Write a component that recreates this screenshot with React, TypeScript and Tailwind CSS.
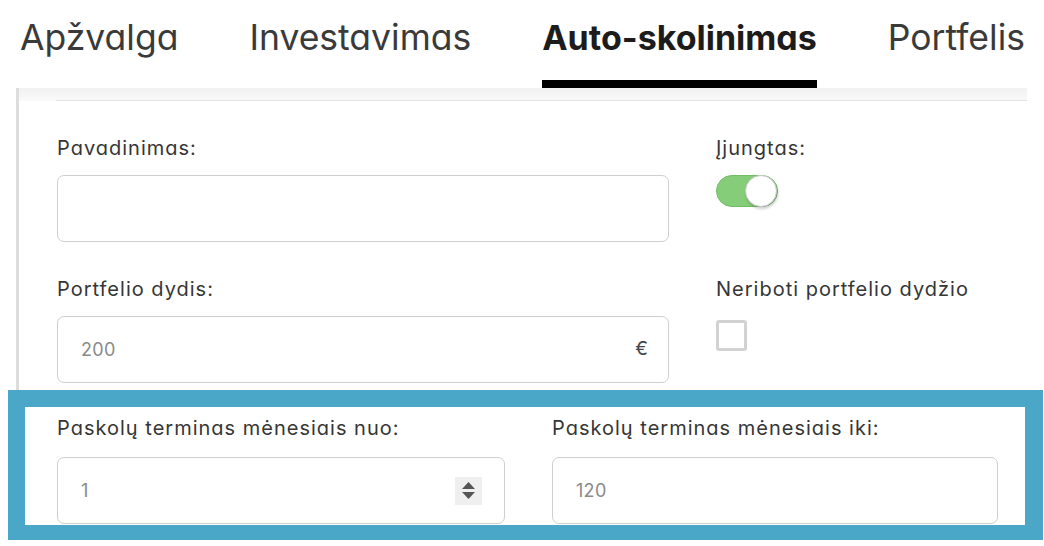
import React from "react";

const font = "[font-family:Inter,'Noto_Sans',sans-serif] [font-feature-settings:'cv11']";

function Label({ children }: { children: React.ReactNode }) {
  return (
    <div className="h-[24px] text-[20px] leading-[24px] tracking-[1px] text-[#363636] whitespace-nowrap">
      {children}
    </div>
  );
}

function Input({ value, right, top = "mt-[15px]" }: { value?: string; right?: React.ReactNode; top?: string }) {
  return (
    <div className={`${top} h-[67px] rounded-[7px] border border-[#cfcfcf] bg-white flex items-center pl-[23px] pr-[20px]`}>
      <span className="flex-1 text-[18px] text-[#8a8a8a] tracking-[0.3px]">{value}</span>
      {right}
    </div>
  );
}

function Spinner() {
  return (
    <div className="mr-[2px] w-[27px] h-[28px] bg-[#efefef] flex flex-col items-center justify-center gap-[3px]">
      <svg width="13" height="7" viewBox="0 0 13 7">
        <path d="M6.5 0 L13 7 L0 7 Z" fill="#555" />
      </svg>
      <svg width="13" height="7" viewBox="0 0 13 7">
        <path d="M0 0 L13 0 L6.5 7 Z" fill="#555" />
      </svg>
    </div>
  );
}

export default function App() {
  const tabs = ["Apžvalga", "Investavimas", "Auto-skolinimas", "Portfelis"];
  return (
    <div className={`w-[1044px] h-[546px] bg-white overflow-hidden ${font}`}>
      {/* Tabs */}
      <div className="h-[88px] flex gap-[71px] pl-[20px]">
        {tabs.map((t, i) => (
          <div
            key={t}
            className={
              i === 2
                ? "h-[88px] pt-[18px] text-[34px] leading-[40px] font-bold text-[#1c1c1c] border-b-[8px] border-black whitespace-nowrap"
                : "h-[88px] pt-[18px] text-[35.5px] leading-[40px] text-[#3a3a3a] whitespace-nowrap"
            }
          >
            {t}
          </div>
        ))}
      </div>

      {/* Card */}
      <div className="ml-[16px] w-[1011px] h-[302px] border-l-[3px] border-[#dddddd] flex flex-col">
        <div className="h-[13px] bg-gradient-to-b from-[#f1f1f1] to-[#fafafa] flex pl-[37px]">
          <div className="flex-1 self-end h-px bg-[#e2e2e2]" />
        </div>
        <div className="pl-[38px] pt-[35px] flex gap-[47px]">
          <div className="w-[612px] flex flex-col">
            <Label>Pavadinimas:</Label>
            <Input />
            <div className="mt-[35px]">
              <Label>Portfelio dydis:</Label>
            </div>
            <Input value="200" right={<span className="text-[19px] text-[#444]">€</span>} />
          </div>
          <div className="flex flex-col">
            <Label>Įjungtas:</Label>
            <div className="mt-[15px] w-[62px] h-[32px] rounded-full bg-[#86cd7a] border border-[#72bd66] flex justify-end items-center">
              <div className="w-[32px] h-[32px] rounded-full bg-white border border-[#c8c8c8] shadow-[1px_2px_3px_rgba(0,0,0,0.2)]" />
            </div>
            <div className="mt-[70px]">
              <Label>Neriboti portfelio dydžio</Label>
            </div>
            <div className="mt-[19px] w-[31px] h-[31px] rounded-[3px] border-[3px] border-[#d2d2d2] bg-white" />
          </div>
        </div>
      </div>

      {/* Highlighted row */}
      <div className="ml-[8px] w-[1035px] h-[150px] border-[#4aa7c8] border-l-[17px] border-t-[17px] border-r-[18px] border-b-[15px] bg-white pl-[32px] pt-[9px] flex gap-[47px]">
        <div className="w-[448px] flex flex-col">
          <Label>Paskolų terminas mėnesiais nuo:</Label>
          <Input value="1" right={<Spinner />} top="mt-[17px]" />
        </div>
        <div className="w-[446px] flex flex-col">
          <Label>Paskolų terminas mėnesiais iki:</Label>
          <Input value="120" top="mt-[17px]" />
        </div>
      </div>
    </div>
  );
}
